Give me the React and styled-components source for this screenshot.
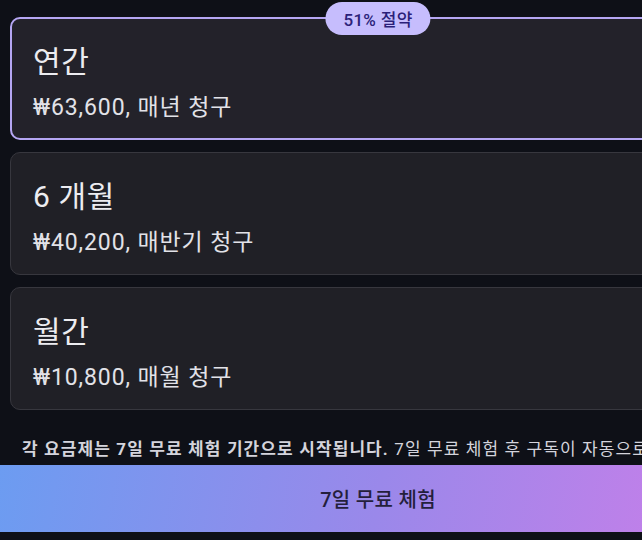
import React from 'react';
import styled, { createGlobalStyle } from 'styled-components';

const GlobalStyle = createGlobalStyle`
  html, body {
    margin: 0;
    padding: 0;
    background: #0e1017;
    overflow: hidden;
  }
  body {
    font-family: Roboto, "Noto Sans CJK KR", sans-serif;
  }
`;

const plans = [
  { title: '연간', price: '₩63,600, 매년 청구', badge: '51% 절약', selected: true },
  { title: '6 개월', price: '₩40,200, 매반기 청구' },
  { title: '월간', price: '₩10,800, 매월 청구' },
];

const App = () => {
  return (
    <Page>
      <GlobalStyle />
      <Plans>
        {plans.map(plan => (
          <Card key={plan.title} selected={plan.selected}>
            {plan.badge && <Badge>{plan.badge}</Badge>}
            <Title>{plan.title}</Title>
            <Price>{plan.price}</Price>
          </Card>
        ))}
      </Plans>
      <Note>
        <strong>각 요금제는 7일 무료 체험 기간으로 시작됩니다.</strong> 7일 무료 체험 후 구독이 자동으로
        갱신됩니다.
      </Note>
      <TrialButton>7일 무료 체험</TrialButton>
    </Page>
  );
};

export default App;

const Page = styled.div`
  width: 756px;
  height: 540px;
  display: flex;
  flex-direction: column;
  background: #0e1017;
`;

const Plans = styled.div`
  display: flex;
  flex-direction: column;
  gap: 12px;
  padding: 17px 10px 0;
`;

const Card = styled.div`
  position: relative;
  display: flex;
  flex-direction: column;
  border-radius: 10px;
  border: ${p => (p.selected ? '2px solid #b5a6f3' : '1px solid #37373e')};
  background: ${p => (p.selected ? '#23222a' : '#202026')};
  padding: ${p => (p.selected ? '21px 21px 15px' : '22px 22px 16px')};
`;

const Badge = styled.span`
  position: absolute;
  top: -17px;
  left: 50%;
  transform: translateX(-50%);
  height: 33px;
  padding: 0 18px;
  display: flex;
  align-items: center;
  border-radius: 17px;
  background: #c6bdfd;
  color: #2b1f79;
  font-size: 17px;
  font-weight: 500;
  letter-spacing: 0.3px;
  white-space: nowrap;
`;

const Title = styled.div`
  color: #ececf0;
  font-size: 30px;
  line-height: 44px;
  letter-spacing: 0.6px;
`;

const Price = styled.div`
  margin-top: 9px;
  color: #e2e2e8;
  font-size: 23px;
  line-height: 30px;
  letter-spacing: 0.9px;
  white-space: nowrap;
`;

const Note = styled.p`
  margin: 28px 0 0;
  padding: 0 22px;
  color: #d4d4dc;
  font-size: 17px;
  line-height: 22px;
  letter-spacing: 1.1px;
  white-space: nowrap;
  overflow: hidden;
  height: 22px;

  strong {
    font-weight: 700;
  }
`;

const TrialButton = styled.button`
  margin-top: 5px;
  height: 67px;
  width: 100%;
  border: none;
  background: linear-gradient(100deg, #6c9cf1 0%, #9a88ea 50%, #cd7de9 100%);
  color: #241f3c;
  font-family: Roboto, "Noto Sans CJK KR", sans-serif;
  font-size: 20px;
  font-weight: 500;
  letter-spacing: 0.3px;
  cursor: pointer;
`;
